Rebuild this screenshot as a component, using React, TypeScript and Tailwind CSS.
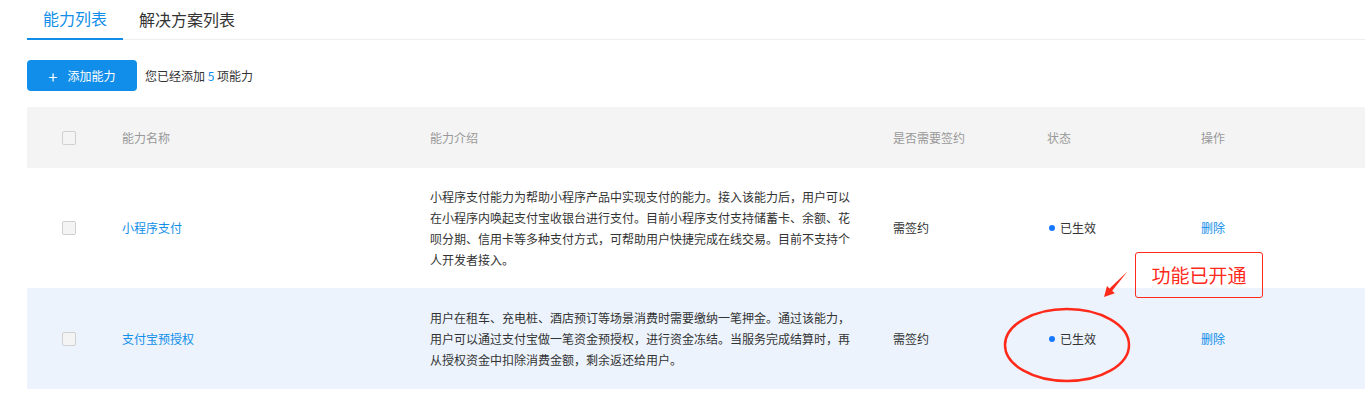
import React from "react";

const font = {
  fontFamily: '"Noto Sans CJK SC", "Noto Sans", Arial, sans-serif',
};

interface Ability {
  name: string;
  desc: string;
  sign: string;
  status: string;
  highlight?: boolean;
}

const abilities: Ability[] = [
  {
    name: "小程序支付",
    desc: "小程序支付能力为帮助小程序产品中实现支付的能力。接入该能力后，用户可以在小程序内唤起支付宝收银台进行支付。目前小程序支付支持储蓄卡、余额、花呗分期、信用卡等多种支付方式，可帮助用户快捷完成在线交易。目前不支持个人开发者接入。",
    sign: "需签约",
    status: "已生效",
  },
  {
    name: "支付宝预授权",
    desc: "用户在租车、充电桩、酒店预订等场景消费时需要缴纳一笔押金。通过该能力，用户可以通过支付宝做一笔资金预授权，进行资金冻结。当服务完成结算时，再从授权资金中扣除消费金额，剩余返还给用户。",
    sign: "需签约",
    status: "已生效",
    highlight: true,
  },
];

const cols = "grid grid-cols-[95px_308px_463px_154px_154px_1fr] items-center";

function Checkbox() {
  return (
    <span className="ml-[35px] block h-[14px] w-[14px] rounded-[2px] border border-[#d0d0d0] bg-[#f4f4f4]" />
  );
}

export default function App() {
  return (
    <div className="relative min-h-[403px] w-full bg-white pl-[27px]" style={font}>
      {/* Tabs */}
      <div className="flex h-[40px] border-b border-[#eeeeee]">
        <div className="flex h-[40px] items-center border-b-2 border-[#108ee9] px-4 pb-[2px] text-[16px] text-[#108ee9]">
          能力列表
        </div>
        <div className="flex h-[40px] items-center px-4 pb-[2px] text-[16px] text-[#333]">
          解决方案列表
        </div>
      </div>

      {/* Toolbar */}
      <div className="mt-[20px] flex items-center gap-2">
        <button className="flex h-[31px] w-[110px] items-center justify-center gap-[10px] rounded-[4px] bg-[#108ee9] text-[12px] text-white">
          <span className="text-[16px] leading-none">+</span>
          <span>添加能力</span>
        </button>
        <span className="text-[12px] text-[#333]">
          您已经添加 <span className="text-[#108ee9]">5</span> 项能力
        </span>
      </div>

      {/* Table */}
      <div className="mt-[16px]">
        <div className={`${cols} h-[61px] bg-[#f4f4f4] text-[12px] text-[#999]`}>
          <Checkbox />
          <div>能力名称</div>
          <div>能力介绍</div>
          <div>是否需要签约</div>
          <div>状态</div>
          <div>操作</div>
        </div>
        {abilities.map((a, i) => (
          <div
            key={i}
            className={`${cols} text-[12px] text-[#333] ${
              a.highlight ? "h-[101px] bg-[#ecf3fd]" : "h-[120px] bg-white"
            }`}
          >
            <Checkbox />
            <div className="text-[#108ee9]">{a.name}</div>
            <div className="w-[420px] leading-[21px]">{a.desc}</div>
            <div>{a.sign}</div>
            <div className="flex items-center gap-[5px] pl-[2px]">
              <span className="h-[6px] w-[6px] rounded-full bg-[#1677ff]" />
              <span>{a.status}</span>
            </div>
            <div className="text-[#108ee9]">删除</div>
          </div>
        ))}
      </div>

      {/* Annotation */}
      <div className="absolute left-[1135px] top-[252px] flex h-[46px] w-[128px] items-center justify-center rounded-[3px] border border-[#ff2a1a] text-[19px] text-[#ff2a1a]">
        功能已开通
      </div>
      <svg
        className="absolute left-[1000px] top-[265px] h-[125px] w-[140px]"
        viewBox="0 0 140 125"
        fill="none"
      >
        <polygon
          points="127.5,6.5 112.2,25.8 114.8,28.2 104,32 107,21 109.5,23.4"
          fill="#ff2a1a"
        />
        <ellipse cx="67" cy="80" rx="62" ry="36" stroke="#ff2a1a" strokeWidth="2.5" />
      </svg>
    </div>
  );
}
